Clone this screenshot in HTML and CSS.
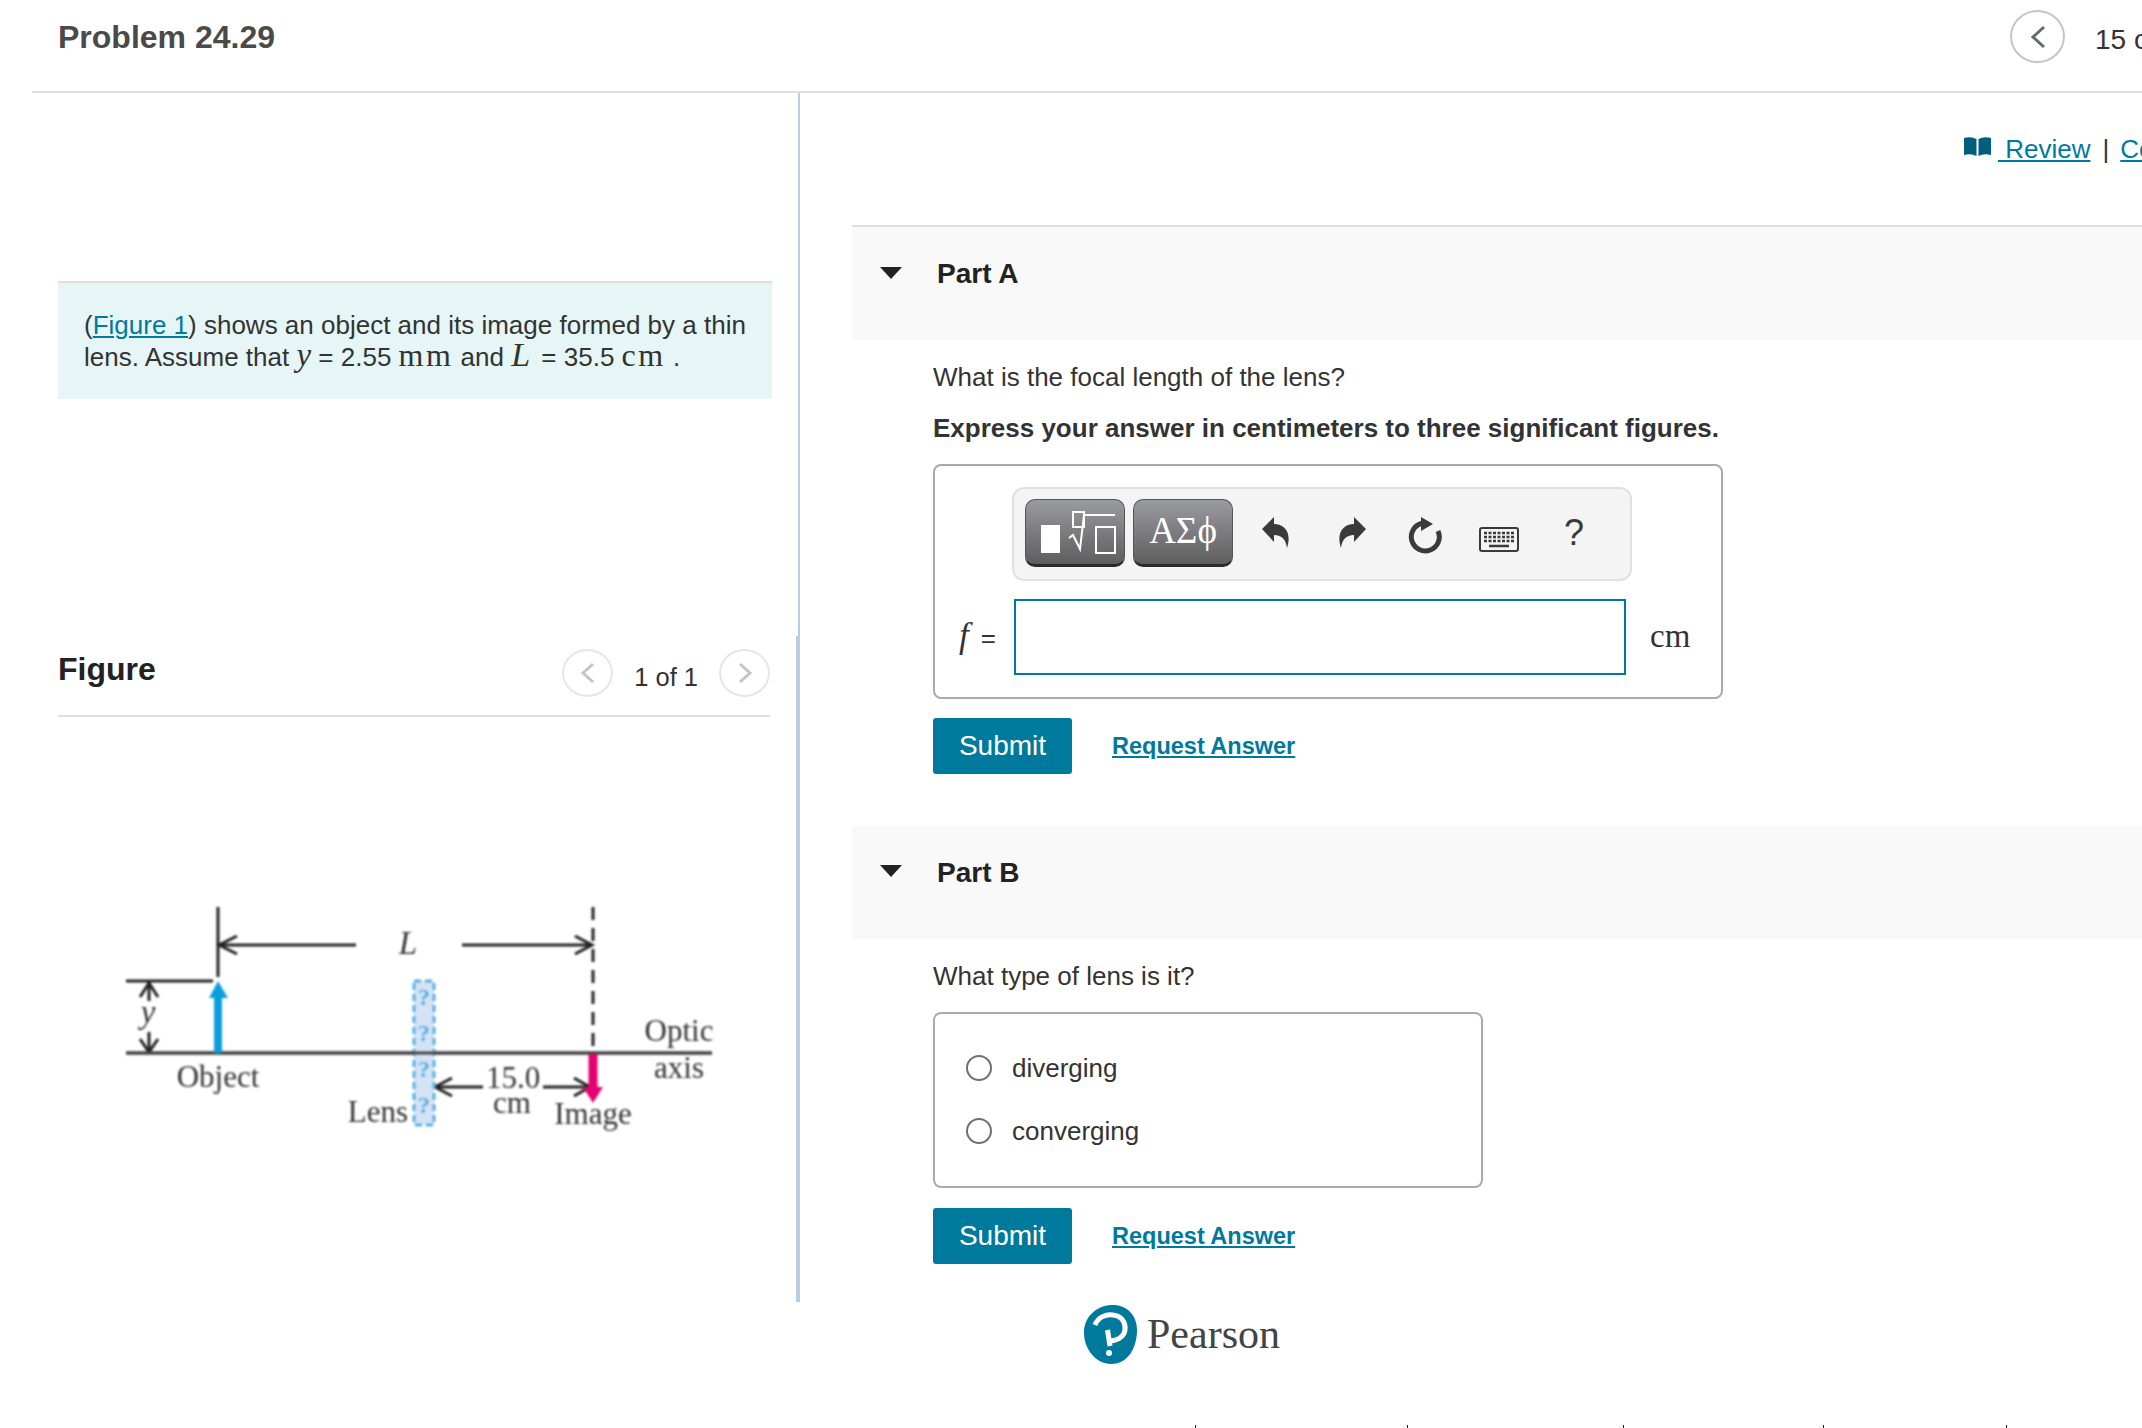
FILE: index.html
```html
<!DOCTYPE html>
<html lang="en">
<head>
<meta charset="utf-8">
<title>Problem 24.29</title>
<link rel="stylesheet" href="styles.css">
</head>
<body>
<div class="page">
  <header class="topbar">
    <h1 class="title">Problem 24.29</h1>
    <div class="pager-top">
      <span class="circle-btn">
        <svg width="20" height="26" viewBox="0 0 20 26"><path d="M16 3 L5 13 L16 23" class="chev-dark"/></svg>
      </span>
      <span class="count">15 of 15</span>
    </div>
  </header>
  <div class="main">
    <aside class="left">
      <section class="left-top">
        <div class="intro">
          <p>(<a href="#">Figure 1</a>) shows an object and its image formed by a thin lens. Assume that <i class="mi">y</i> = 2.55 <span class="mu">mm</span> and <i class="mi big">L</i> = 35.5 <span class="mu">cm</span> .</p>
        </div>
      </section>
      <section class="left-bottom">
        <div class="fig-head">
          <h2 class="fig-title">Figure</h2>
          <div class="fig-pager">
            <span class="circle-btn small"><svg width="16" height="24" viewBox="0 0 16 24"><path d="M13 3 L3 12 L13 21" class="chev-light"/></svg></span>
            <span class="fig-count">1 of 1</span>
            <span class="circle-btn small"><svg width="16" height="24" viewBox="0 0 16 24"><path d="M3 3 L13 12 L3 21" class="chev-light"/></svg></span>
          </div>
        </div>
        <svg class="diagram" width="700" height="260" viewBox="100 890 700 260">
          <g class="d-line">
            <path d="M218 908V978M126 982H213M126 1054H712M218 946H356M462 946H592"/>
            <path d="M593 908V1054" class="dash"/>
            <path d="M149 984V1002M149 1033V1053M434 1088H483M543 1088H590"/>
            <path d="M237 937L219 946L237 955M575 937L592 946L575 955M140 998L149 984L158 998M140 1040L149 1053L158 1040M452 1079L435 1088L452 1097M574 1079L590 1088L574 1097" class="thin"/>
          </g>
          <rect x="414" y="982" width="20" height="144" class="lens"/>
          <path d="M126 1054H712" class="d-axis"/>
          <path d="M218 1054V996" class="blue-stem"/>
          <path d="M209 999L218 982L228 999Z" class="blue-head"/>
          <path d="M593 1055V1092" class="pink-stem"/>
          <path d="M583 1088H603L593 1104Z" class="pink-head"/>
          <g class="d-text">
            <text x="424" y="1006" class="d-q">?</text>
            <text x="424" y="1042" class="d-q">?</text>
            <text x="424" y="1078" class="d-q">?</text>
            <text x="424" y="1114" class="d-q">?</text>
            <text x="408" y="955" class="d-i">L</text>
            <text x="148" y="1024" class="d-i">y</text>
            <text x="218" y="1088">Object</text>
            <text x="378" y="1123">Lens</text>
            <text x="513" y="1089">15.0</text>
            <text x="512" y="1114">cm</text>
            <text x="593" y="1125">Image</text>
            <text x="679" y="1042">Optic</text>
            <text x="679" y="1079">axis</text>
          </g>
        </svg>
      </section>
    </aside>
    <section class="right">
      <div class="links">
        <svg class="book" width="27" height="20" viewBox="0 0 27 20"><path d="M0 1 Q7 -1 12.500 2 V19 Q7 16 0 18Z M14.500 2 Q20 -1 27 1 V18 Q20 16 14.500 19Z"/></svg>
        <a href="#" class="review">&nbsp;Review</a>
        <span class="sep">|</span>
        <a href="#" class="constants">Constants</a>
      </div>

      <div class="part first"><span class="tri"></span><h3>Part A</h3></div>
      <div class="body">
        <p class="q">What is the focal length of the lens?</p>
        <p class="q strong">Express your answer in centimeters to three significant figures.</p>
        <div class="answer">
          <div class="toolbar">
            <span class="tbtn wide">
              <svg width="98" height="65" viewBox="0 0 98 65"><rect x="15" y="25" width="19" height="28" class="w-fill"/><rect x="47" y="12" width="11" height="15" class="w-line"/><path d="M43 38 L47 35 L54 49 L58 15 H89" class="w-line"/><rect x="70" y="27" width="19" height="26" class="w-line"/></svg>
            </span>
            <span class="tbtn greek">ΑΣϕ</span>
            <span class="ticon undo"><svg width="28" height="32" viewBox="0 0 28 32"><path d="M0 12 L12 0 V7 C23 7 30 16 25 31 C24 23 20 18 12 18 V25Z"/></svg></span>
            <span class="ticon redo"><svg width="28" height="32" viewBox="0 0 28 32"><path d="M28 12 L16 0 V7 C5 7 -2 16 3 31 C4 23 8 18 16 18 V25Z"/></svg></span>
            <span class="ticon reset"><svg width="36" height="38" viewBox="0 0 36 38"><path d="M30 15 A14 14 0 1 1 14 7.300" class="r-arc"/><path d="M13 1 L25 8 L13 15Z" class="r-head"/></svg></span>
            <span class="ticon kbd"><svg width="40" height="25" viewBox="0 0 40 25"><rect x="1" y="1" width="38" height="23" rx="2" class="k-box"/><path d="M5 6H35M5 10H35M5 14H35" class="k-keys"/><path d="M10 19H30" class="k-bar"/></svg></span>
            <span class="help">?</span>
          </div>
          <div class="entry">
            <span class="var"><i class="fi">f</i><span class="eq">=</span></span>
            <span class="field"></span>
            <span class="unit">cm</span>
          </div>
        </div>
        <div class="actions">
          <button class="submit" type="button">Submit</button>
          <a href="#" class="req">Request Answer</a>
        </div>
      </div>

      <div class="part second"><span class="tri"></span><h3>Part B</h3></div>
      <div class="body">
        <p class="q">What type of lens is it?</p>
        <div class="choices">
          <label class="choice"><span class="radio"></span>diverging</label>
          <label class="choice"><span class="radio"></span>converging</label>
        </div>
        <div class="actions">
          <button class="submit" type="button">Submit</button>
          <a href="#" class="req">Request Answer</a>
        </div>
      </div>

      <div class="brand">
        <svg width="54" height="59" viewBox="0 0 54 59"><path d="M27 0 C42 -1 54 10 53 27 C52 46 42 59 27 59 C12 59 0 44 0 28 C0 12 12 1 27 0Z" class="logo-bg"/><path d="M11 20 C14 12 22 9 29 10 C38 11 42 18 41 25 C40 32 33 35 27 36" class="logo-p"/><path d="M23.500 25 L26 41" class="logo-p"/><circle cx="25" cy="48" r="3" class="logo-dot"/></svg>
        <span class="brand-name">Pearson</span>
      </div>
      <div class="ticks"><span></span><span></span><span></span><span></span><span></span></div>
    </section>
  </div>
</div>
</body>
</html>
```
FILE: styles.css
```css
* { box-sizing: border-box; }
html, body { margin: 0; padding: 0; background: #fff; }
body { font-family: "Liberation Sans", Arial, sans-serif; color: #333; font-size: 26px; }
.page { width: 2142px; height: 1428px; overflow: hidden; }
a { color: #007a9c; text-decoration: underline; }
p, h1, h2, h3 { margin: 0; }

.topbar { margin-left: 32px; height: 93px; border-bottom: 2px solid #dedede; display: flex; justify-content: space-between; white-space: nowrap; }
.title { margin: 19px 0 0 26px; font-size: 32px; line-height: 36px; font-weight: 700; color: #4a4a4a; }
.pager-top { width: 132px; display: flex; align-items: flex-start; gap: 30px; padding-top: 10px; overflow: visible; }
.circle-btn { flex: none; width: 55px; height: 53px; border: 2px solid #c4c4c4; border-radius: 50%; display: flex; align-items: center; justify-content: center; }
.circle-btn.small { width: 51px; height: 48px; border-color: #e6e6e6; }
.chev-dark { fill: none; stroke: #5f6b6b; stroke-width: 3; }
.chev-light { fill: none; stroke: #c4c4c4; stroke-width: 3; }
.count { font-size: 28px; line-height: 60px; color: #333; }

.main { display: flex; height: 1335px; }
.left { flex: none; width: 800px; height: 1209px; }
.left-top { height: 543px; border-right: 2px solid #b9cde0; padding: 188px 26px 0 58px; }
.left-bottom { height: 666px; border-right: 4px solid #b9cde0; padding: 13px 26px 0 58px; }
.intro { height: 118px; background: #e6f6f6; border-top: 2px solid #dedede; padding: 26px 24px 0 26px; font-size: 26px; line-height: 32px; color: #333; }
.mi { font-family: "Liberation Serif", serif; font-size: 33px; line-height: 20px; }
.mi.big { font-size: 34px; margin-right: 4px; }
.mu { font-family: "Liberation Serif", serif; font-size: 32px; line-height: 20px; letter-spacing: 2.500px; }

.fig-head { height: 68px; border-bottom: 2px solid #dedede; display: flex; justify-content: space-between; }
.fig-title { font-size: 32px; line-height: 40px; font-weight: 700; color: #222; }
.fig-pager { display: flex; gap: 21px; align-items: flex-start; }
.fig-count { font-size: 25.500px; line-height: 56px; color: #333; }

.diagram { display: block; margin: 172px 0 0 42px; filter: blur(0.8px); }
.d-line { fill: none; stroke: #222; stroke-width: 3; }
.d-line .dash { stroke-dasharray: 13 8; }
.d-line .thin { stroke-width: 3; }
.lens { fill: #d4e3f4; stroke: #59aee3; stroke-width: 3; stroke-dasharray: 7 4; }
.d-axis { fill: none; stroke: #444; stroke-width: 3; }
.blue-stem { fill: none; stroke: #0a9fdc; stroke-width: 8; }
.blue-head { fill: #0a9fdc; }
.pink-stem { fill: none; stroke: #e4006f; stroke-width: 9; }
.pink-head { fill: #e4006f; }
.d-text text { font-family: "Liberation Serif", serif; font-size: 31px; fill: #333; text-anchor: middle; }
.d-text .d-q { font-size: 24px; fill: #59aee3; font-weight: 700; }
.d-text .d-i { font-style: italic; font-size: 33px; }

.right { flex: none; width: 1342px; padding-left: 52px; }
.links { height: 132px; padding: 35px 0 0 1112px; display: flex; align-items: flex-start; white-space: nowrap; font-size: 26px; line-height: 42px; }
.book { flex: none; margin-top: 9px; fill: #005f7c; }
.review { margin-left: 7px; }
.sep { margin: 0 11px 0 12px; color: #333; }
.part { background: #f9f9f9; display: flex; align-items: flex-start; padding-left: 28px; }
.part.first { height: 115px; border-top: 2px solid #dedede; padding-top: 30px; }
.part.second { margin-top: 52px; height: 113px; padding-top: 30px; }
.part.second .tri { margin-top: 9px; }
.tri { flex: none; width: 0; height: 0; margin-top: 10px; border-left: 11px solid transparent; border-right: 11px solid transparent; border-top: 12px solid #222; }
.part h3 { margin-left: 35px; font-size: 28px; line-height: 34px; font-weight: 700; color: #222; }
.body { padding-left: 81px; }
.q { font-size: 26px; line-height: 32px; color: #333; margin-top: 21px; }
.q.strong { font-weight: 700; margin-top: 19px; }
.answer { width: 790px; height: 235px; margin-top: 20px; border: 2px solid #aaa; border-radius: 8px; padding: 21px 0 0 77px; }
.answer + .actions { margin-top: 19px; }
.toolbar { width: 620px; height: 94px; background: #f4f4f4; border: 2px solid #e0e0e0; border-radius: 12px; display: flex; align-items: flex-start; padding: 10px 0 0 11px; }
.tbtn { flex: none; height: 68px; background: linear-gradient(#9a9aa1, #5e5e5e); border: 1px solid #555; border-bottom: 3px solid #2a2a2a; border-radius: 10px; display: flex; align-items: center; justify-content: center; color: #fff; }
.tbtn.wide { width: 100px; }
.tbtn.greek { width: 100px; margin-left: 8px; font-family: "Liberation Serif", serif; font-size: 37px; padding-bottom: 3px; }
.w-fill { fill: #fff; }
.w-line { fill: none; stroke: #fff; stroke-width: 2; }
.ticon { flex: none; display: block; height: 40px; }
.undo { margin: 18px 0 0 29px; fill: #3a3a3a; }
.redo { margin: 18px 0 0 48px; fill: #3a3a3a; }
.reset { margin: 17px 0 0 42px; }
.r-arc { fill: none; stroke: #3a3a3a; stroke-width: 5; }
.r-head { fill: #3a3a3a; }
.kbd { margin: 28px 0 0 35px; }
.k-box { fill: #f4f4f4; stroke: #3a3a3a; stroke-width: 2; }
.k-keys { fill: none; stroke: #3a3a3a; stroke-width: 2.500; stroke-dasharray: 3 1.500; }
.k-bar { fill: none; stroke: #3a3a3a; stroke-width: 2.500; }
.help { flex: none; margin: 14px 0 0 45px; font-size: 36px; line-height: 40px; color: #3a3a3a; }
.entry { display: flex; align-items: flex-start; margin-top: 18px; margin-left: -53px; }
.var { width: 55px; padding: 17px 0 0 0; font-size: 26px; line-height: 40px; white-space: nowrap; }
.fi { font-family: "Liberation Serif", serif; font-size: 35px; line-height: 40px; }
.eq { margin-left: 12px; }
.field { flex: none; width: 612px; height: 76px; border: 2px solid #007a9c; background: #fff; }
.unit { margin-left: 24px; padding-top: 17px; font-family: "Liberation Serif", serif; font-size: 33px; line-height: 40px; }
.actions { display: flex; align-items: center; margin-top: 20px; }
.submit { width: 139px; height: 56px; border: 0; border-radius: 3px; background: #007a9c; color: #fff; font-family: "Liberation Sans", Arial, sans-serif; font-size: 28px; padding: 0; }
.req { margin-left: 40px; font-size: 23.500px; font-weight: 700; }
.choices { width: 550px; height: 176px; margin-top: 20px; border: 2px solid #aaa; border-radius: 8px; padding: 36px 0 0 31px; }
.choice { display: flex; align-items: center; height: 36px; font-size: 26px; color: #333; margin-bottom: 27px; }
.radio { flex: none; width: 26px; height: 26px; margin-right: 20px; border: 2px solid #707070; border-radius: 50%; background: #fff; }
.brand { display: flex; align-items: flex-end; margin: 41px 0 0 232px; }
.logo-bg { fill: #007a9c; }
.logo-p { fill: none; stroke: #fff; stroke-width: 5; }
.logo-dot { fill: #fff; }
.brand-name { margin-left: 9px; padding-bottom: 6px; font-family: "Liberation Serif", serif; font-size: 42px; line-height: 48px; color: #444; }
.ticks { display: grid; grid-template-columns: 212px 216px 200px 183px 100px; height: 3px; margin: 61px 0 0 343px; }
.ticks span { border-left: 1px solid #222; }
```
